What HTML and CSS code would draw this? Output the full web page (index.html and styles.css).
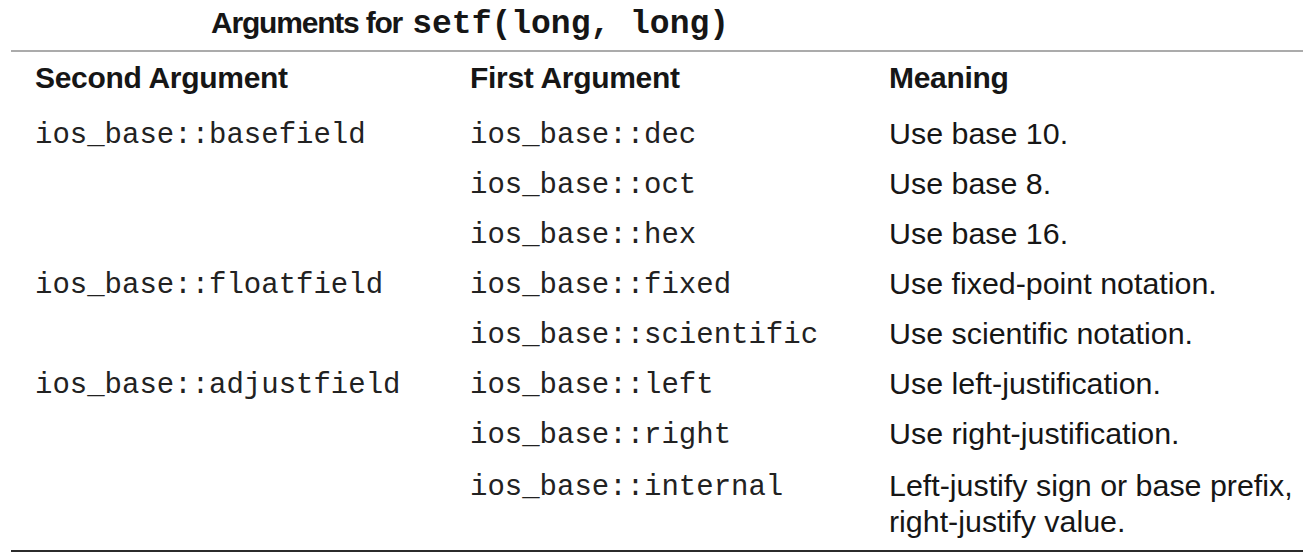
FILE: index.html
```html
<!DOCTYPE html>
<html>
<head>
<meta charset="utf-8">
<link rel="stylesheet" href="styles.css">
</head>
<body>
<div class="page">
  <div class="caption">Arguments for <code class="cap-code">setf(long, long)</code></div>
  <div class="table">
    <div class="row head">
      <div class="cell">Second Argument</div>
      <div class="cell">First Argument</div>
      <div class="cell">Meaning</div>
    </div>
    <div class="row">
      <div class="cell mono">ios_base::basefield</div>
      <div class="cell mono">ios_base::dec</div>
      <div class="cell">Use base 10.</div>
    </div>
    <div class="row">
      <div class="cell mono"></div>
      <div class="cell mono">ios_base::oct</div>
      <div class="cell">Use base 8.</div>
    </div>
    <div class="row">
      <div class="cell mono"></div>
      <div class="cell mono">ios_base::hex</div>
      <div class="cell">Use base 16.</div>
    </div>
    <div class="row">
      <div class="cell mono">ios_base::floatfield</div>
      <div class="cell mono">ios_base::fixed</div>
      <div class="cell">Use fixed-point notation.</div>
    </div>
    <div class="row">
      <div class="cell mono"></div>
      <div class="cell mono">ios_base::scientific</div>
      <div class="cell">Use scientific notation.</div>
    </div>
    <div class="row">
      <div class="cell mono">ios_base::adjustfield</div>
      <div class="cell mono">ios_base::left</div>
      <div class="cell">Use left-justification.</div>
    </div>
    <div class="row">
      <div class="cell mono"></div>
      <div class="cell mono">ios_base::right</div>
      <div class="cell">Use right-justification.</div>
    </div>
    <div class="row last">
      <div class="cell mono"></div>
      <div class="cell mono">ios_base::internal</div>
      <div class="cell">Left-justify sign or base prefix,<br>right-justify value.</div>
    </div>
  </div>
</div>
</body>
</html>
```
FILE: styles.css
```css
html, body {
  margin: 0;
  padding: 0;
  background: #ffffff;
}

.page {
  margin-left: 11px;
  color: #161616;
  font-family: "Liberation Sans", Arial, sans-serif;
}

.caption {
  height: 52px;
  box-sizing: border-box;
  padding-left: 200px;
  padding-top: 5px;
  font-size: 30px;
  font-weight: bold;
  line-height: 36px;
  letter-spacing: -1.2px;
  border-bottom: 2px solid #ababab;
  white-space: nowrap;
}

.cap-code {
  margin-left: 3px;
  font-family: "Liberation Mono", "Courier New", monospace;
  font-size: 33px;
  font-weight: bold;
  letter-spacing: 0;
}

.table {
  border-bottom: 3px solid #2b2b2b;
}

.row {
  display: grid;
  grid-template-columns: 435px 419px 1fr;
  padding-left: 24px;
  padding-top: 7px;
  padding-bottom: 7px;
  line-height: 36px;
  font-size: 30.4px;
}

.row.head {
  padding-top: 8px;
  padding-bottom: 12px;
  font-weight: bold;
  font-size: 30px;
  letter-spacing: -0.3px;
}

.row.last {
  padding-top: 9px;
  padding-bottom: 11px;
}

.cell {
  white-space: nowrap;
}

.mono {
  font-family: "Liberation Mono", "Courier New", monospace;
  font-size: 29px;
  line-height: 30px;
  padding-top: 6px;
  color: #222222;
}
```
